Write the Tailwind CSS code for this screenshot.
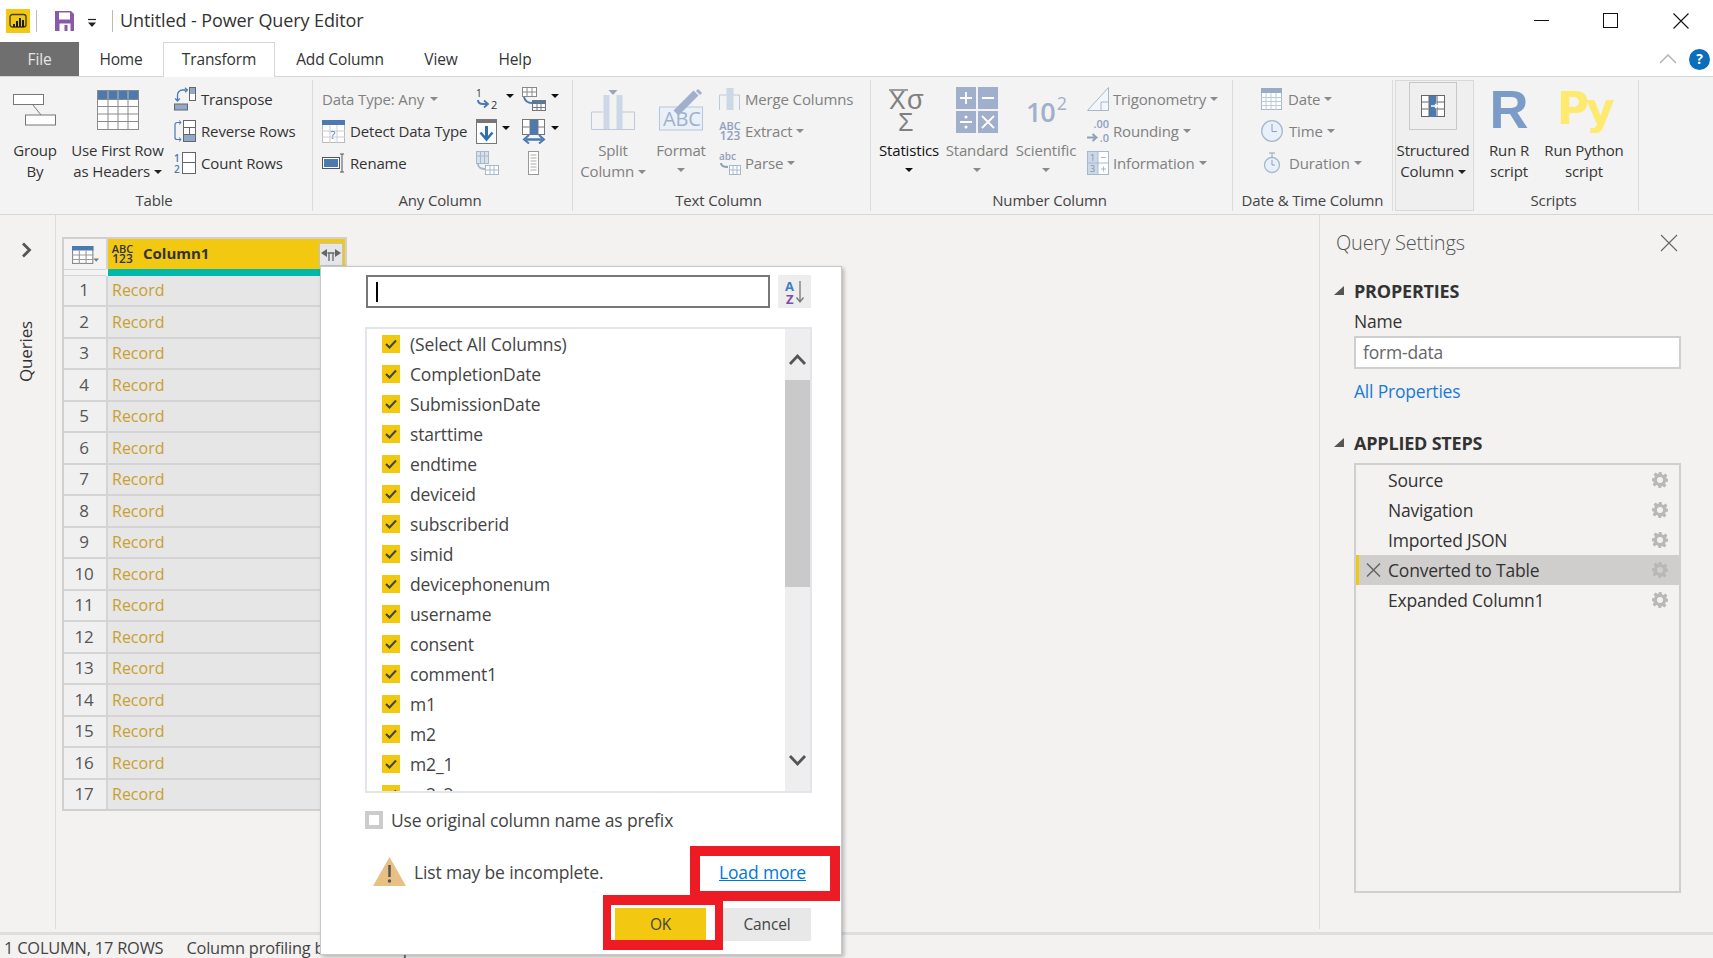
<!DOCTYPE html>
<html lang="en">
<head>
<meta charset="utf-8">
<title>Untitled - Power Query Editor</title>
<script src="https://cdn.jsdelivr.net/npm/@tailwindcss/browser@4"></script>
</head>
<body class="font-['Open_Sans',sans-serif] text-[#333] bg-white overflow-hidden tracking-[-0.15px]">
<svg class="absolute w-0 h-0">
  <symbol id="gear" viewBox="0 0 16 16"><path d="M6.500 0h3l.4 2.200 1.600.7L13.400 1.600l2 2-1.300 1.900.7 1.600L16 6.500v3l-2.200.4-.7 1.600 1.300 1.900-2 2-1.900-1.300-1.600.7L9.500 16h-3l-.4-2.200-1.600-.7-1.900 1.300-2-2 1.300-1.900-.7-1.600L0 9.500v-3l2.200-.4.7-1.600L1.600 2.600l2-2 1.900 1.300 1.600-.7z M8 5a3 3 0 100 6 3 3 0 000-6z" fill="#b8b8b8" fill-rule="evenodd"/></symbol>
  <symbol id="chk" viewBox="0 0 12 10"><path d="M1 5l3.500 3.500L11 1.500" stroke="#444" stroke-width="2" fill="none"/></symbol>
</svg>
<div class="relative w-[1713px] h-[958px] flex flex-col overflow-hidden text-[15px] leading-[20.5px]">

<!-- title bar -->
<div class="h-[42px] flex items-center shrink-0 pb-[1px]">
  <div class="ml-[6px] w-[24px] h-[24px] bg-[#f2c811] flex items-center justify-center">
    <svg class="w-[18px] h-[16px]" viewBox="0 0 18 16"><rect x="1" y="1.500" width="16" height="12.500" rx="2.500" fill="none" stroke="#4a4210" stroke-width="1.400"/><path d="M5 14v-3M8 14V8M11 14V5M14 14V7" stroke="#1c1c1c" stroke-width="2"/></svg>
  </div>
  <div class="ml-[6px] w-px h-[22px] bg-[#bbb]"></div>
  <svg class="ml-[18px] w-[19px] h-[20px]" viewBox="0 0 19 20"><path d="M0 0h16l3 3v17H0z" fill="#8a5aa8"/><rect x="4" y="1.500" width="11" height="7" fill="#fff"/><rect x="4.500" y="12.500" width="11" height="7.500" fill="#fff"/><rect x="9.500" y="14" width="3" height="6" fill="#8a5aa8"/></svg>
  <svg class="ml-[13px] w-[10px] h-[10px] mt-[4px]" viewBox="0 0 10 10"><path d="M1 1.500h8" stroke="#222" stroke-width="1.200"/><path d="M1 4.500h8L5 9z" fill="#222"/></svg>
  <div class="ml-[15px] w-px h-[22px] bg-[#bbb]"></div>
  <div class="ml-[7px] text-[18px] tracking-[-0.1px] text-[#333]">Untitled - Power Query Editor</div>
  <div class="ml-auto flex items-center mr-[24px]">
    <div class="w-[15px] h-px bg-[#111] mr-[54px]"></div>
    <div class="w-[15px] h-[15px] border border-[#111] mr-[55px]"></div>
    <svg class="w-[16px] h-[16px]" viewBox="0 0 16 16"><path d="M.5.5l15 15M15.500.5l-15 15" stroke="#111" stroke-width="1.100" fill="none"/></svg>
  </div>
</div>

<!-- tabs -->
<div class="relative h-[34px] flex shrink-0 text-[15.5px] items-stretch">
  <div class="w-[79px] bg-[#6f6f6f] text-[#e6e6e6] flex items-center justify-center">File</div>
  <div class="w-[84px] flex items-center justify-center">Home</div>
  <div class="w-[112px] h-[35px] pb-[1px] bg-white border border-b-0 border-[#d6d6d6] flex items-center justify-center z-10">Transform</div>
  <div class="w-[130px] flex items-center justify-center">Add Column</div>
  <div class="w-[72px] flex items-center justify-center">View</div>
  <div class="w-[76px] flex items-center justify-center">Help</div>
  <div class="ml-auto flex items-center pr-[3px]">
    <svg class="w-[18px] h-[10px] mr-[12px]" viewBox="0 0 18 10"><path d="M1 9l8-8 8 8" stroke="#b5b5b5" stroke-width="1.500" fill="none"/></svg>
    <div class="w-[21px] h-[21px] rounded-full bg-[#0a6ebd] text-white text-[14px] font-bold flex items-center justify-center">?</div>
  </div>
</div>

<!-- ribbon -->
<div class="relative h-[139px] shrink-0 bg-[#f3f3f3] border-y border-[#d6d6d6] flex py-[3px]">

  <!-- Table -->
  <div class="w-[313px] border-r border-[#dcdcdc] flex flex-col">
    <div class="flex-1 flex">
      <div class="w-[70px] flex flex-col items-center">
        <div class="h-[60px] flex items-center justify-center">
          <svg class="w-[44px] h-[32px]" viewBox="0 0 44 32"><rect x=".5" y=".5" width="30" height="10" fill="#fff" stroke="#777"/><rect x="12.500" y="21" width="30" height="10" fill="#fff" stroke="#777"/><path d="M20 11l8 10" stroke="#777"/></svg>
        </div>
        <div class="text-center">Group<br>By</div>
      </div>
      <div class="w-[95px] flex flex-col items-center">
        <div class="h-[60px] flex items-center justify-center">
          <svg class="w-[42px] h-[40px]" viewBox="0 0 42 40"><rect x=".5" y=".5" width="41" height="39" fill="#fff" stroke="#8a8a8a"/><rect x="1" y="1" width="40" height="8" fill="#4a7ab0"/><path d="M11 1v38M21 1v38M31 1v38M1 16.500h40M1 24h40M1 31.500h40M1 9.500h40" stroke="#8a8a8a" fill="none"/><path d="M11 1v8M21 1v8M31 1v8" stroke="#fff" opacity=".4"/></svg>
        </div>
        <div class="text-center whitespace-nowrap">Use First Row<br>as Headers <span class="inline-block w-0 h-0 border-x-[4px] border-t-[4px] border-x-transparent border-t-[#222] align-[3px]"></span></div>
      </div>
      <div class="ml-[9px] pt-[3px] flex flex-col">
        <div class="h-[32px] flex items-center gap-[5px]">
          <svg class="w-[22px] h-[24px]" viewBox="0 0 22 24"><rect x="15.500" y=".5" width="6" height="13" fill="#fff" stroke="#666"/><rect x="16" y="1" width="5" height="6" fill="#8ea9c9"/><rect x=".5" y="17" width="13" height="6" fill="#8ea9c9" stroke="#666"/><path d="M3.500 14V8a5 5 0 015-5h4" stroke="#4a7ab0" stroke-width="1.300" fill="none"/><path d="M11 .8L13.500 3 11 5.200M1.200 11.500L3.500 14l2.300-2.500" stroke="#4a7ab0" stroke-width="1.200" fill="none"/></svg>
          <span>Transpose</span>
        </div>
        <div class="h-[32px] flex items-center gap-[5px]">
          <svg class="w-[22px] h-[24px]" viewBox="0 0 22 24"><rect x="9.500" y="1.500" width="12" height="7" fill="#fff" stroke="#666"/><rect x="9.500" y="8.500" width="12" height="7" fill="#fff" stroke="#666"/><path d="M15.500 8.500v7" stroke="#666"/><rect x="9.500" y="15.500" width="12" height="7" fill="#8ea9c9" stroke="#666"/><path d="M7 3.500H3a2 2 0 00-2 2v13a2 2 0 002 2h4" stroke="#4a7ab0" stroke-width="1.200" fill="none"/><path d="M5 1.500l2.200 2-2.200 2M5 18.500l2.200 2-2.200 2" stroke="#4a7ab0" fill="none"/></svg>
          <span>Reverse Rows</span>
        </div>
        <div class="h-[32px] flex items-center gap-[5px]">
          <svg class="w-[22px] h-[24px]" viewBox="0 0 22 24"><text x="0" y="10.500" font-size="10" font-family="Open Sans" font-weight="600" fill="#4a7ab0">1</text><text x="0" y="22" font-size="10" font-family="Open Sans" font-weight="600" fill="#4a7ab0">2</text><rect x="8.500" y="1.500" width="13" height="10" fill="#fff" stroke="#666"/><rect x="8.500" y="11.500" width="13" height="11" fill="#fff" stroke="#666"/></svg>
          <span>Count Rows</span>
        </div>
      </div>
    </div>
    <div class="h-[22px] pt-[1px] pr-[4px] text-center text-[#444]">Table</div>
  </div>

  <!-- Any Column -->
  <div class="w-[260px] border-r border-[#dcdcdc] flex flex-col">
    <div class="flex-1 flex">
      <div class="ml-[9px] w-[154px] pt-[3px] flex flex-col">
        <div class="h-[32px] flex items-center text-[#808080]">Data Type: Any<span class="ml-[6px] w-0 h-0 border-x-[4px] border-t-[4px] border-x-transparent border-t-[#8a8a8a]"></span></div>
        <div class="h-[32px] flex items-center gap-[5px]">
          <svg class="w-[23px] h-[24px]" viewBox="0 0 23 24"><rect x=".5" y="1.500" width="22" height="22" fill="#fff" stroke="#bbb"/><rect x="0" y="1" width="23" height="5" fill="#4a7ab0"/><path d="M8 6v18M15 6v18M0 12h23M0 18h23" stroke="#cfcfcf"/><text x="8.500" y="20" font-size="11" font-family="Open Sans" fill="#4a7ab0">?</text></svg>
          <span class="whitespace-nowrap">Detect Data Type</span>
        </div>
        <div class="h-[32px] flex items-center gap-[5px]">
          <svg class="w-[23px] h-[24px]" viewBox="0 0 23 24"><rect x=".5" y="6.500" width="17" height="11" fill="#fff" stroke="#555"/><rect x="2" y="8" width="14" height="8" fill="#4a7ab0"/><path d="M18 3h4M18 21h4M20 3v18" stroke="#555" fill="none"/></svg>
          <span>Rename</span>
        </div>
      </div>
      <div class="w-[46px] pt-[3px] flex flex-col">
        <div class="h-[32px] flex items-center gap-[5px]">
          <svg class="w-[25px] h-[22px]" viewBox="0 0 25 22"><text x="0" y="9" font-size="10" font-family="Open Sans" fill="#333">1</text><path d="M2 12c0 3 2 4 5 4h4" stroke="#4a7ab0" stroke-width="2" fill="none"/><path d="M8 12.500l4 3.500-4 3.500" stroke="#4a7ab0" stroke-width="1.800" fill="none"/><text x="15" y="21" font-size="11" font-family="Open Sans" fill="#333">2</text></svg>
          <span class="w-0 h-0 border-x-[4px] border-t-[4px] border-x-transparent border-t-[#111] -mt-[6px]"></span>
        </div>
        <div class="h-[32px] flex items-center gap-[5px]">
          <svg class="w-[21px] h-[25px]" viewBox="0 0 21 25"><rect x=".5" y=".5" width="20" height="24" fill="#fff" stroke="#777"/><rect x="0" y="0" width="21" height="4" fill="#777"/><path d="M10.500 7v13" stroke="#2f6fae" stroke-width="3"/><path d="M4.500 13.500l6 7 6-7" stroke="#2f6fae" stroke-width="2.500" fill="none"/></svg>
          <span class="w-0 h-0 border-x-[4px] border-t-[4px] border-x-transparent border-t-[#111] -mt-[6px]"></span>
        </div>
        <div class="h-[32px] flex items-center">
          <svg class="w-[23px] h-[24px]" viewBox="0 0 23 24"><rect x=".5" y=".5" width="12" height="12" fill="#d8e0ea" stroke="#a7b8cc"/><path d="M.5 5h12M4.500.5v12M8.500.5v12" stroke="#a7b8cc"/><rect x="9.500" y="14.500" width="13" height="9" fill="#fff" stroke="#a7b8cc"/><path d="M9.500 19h13M14 14.500v9M18 14.500v9" stroke="#a7b8cc"/><path d="M2 13c0 3 3 5 7 5" stroke="#a7b8cc" stroke-width="2" fill="none"/></svg>
        </div>
      </div>
      <div class="pt-[3px] flex flex-col">
        <div class="h-[32px] flex items-center gap-[5px]">
          <svg class="w-[24px] h-[24px]" viewBox="0 0 24 24"><rect x=".5" y=".5" width="14" height="9" fill="#fff" stroke="#888"/><path d="M.5 5h14M5 .5v9M10 .5v9" stroke="#888"/><rect x="10.500" y="13.500" width="13" height="10" fill="#fff" stroke="#777"/><rect x="11" y="14" width="12" height="3" fill="#4a7ab0"/><path d="M10.500 20.500h13M15 14v10M19 14v10" stroke="#777"/><path d="M2 10c1 4 4 6 8 6" stroke="#4a7ab0" stroke-width="2" fill="none"/></svg>
          <span class="w-0 h-0 border-x-[4px] border-t-[4px] border-x-transparent border-t-[#111] -mt-[6px]"></span>
        </div>
        <div class="h-[32px] flex items-center gap-[5px]">
          <svg class="w-[24px] h-[25px]" viewBox="0 0 24 25"><rect x=".5" y=".5" width="22" height="15" fill="#fff" stroke="#777"/><rect x="8" y="1" width="8" height="15" fill="#4a7ab0"/><path d="M8 .5v15M16 .5v15M.5 8h7M16 8h6" stroke="#777"/><path d="M4 20.500h16" stroke="#4a7ab0" stroke-width="2.500"/><path d="M7 16l-5 4.500 5 4M17 16l5 4.500-5 4" stroke="#4a7ab0" stroke-width="2" fill="none"/></svg>
          <span class="w-0 h-0 border-x-[4px] border-t-[4px] border-x-transparent border-t-[#111] -mt-[6px]"></span>
        </div>
        <div class="h-[32px] flex items-center pl-[6px]">
          <svg class="w-[11px] h-[24px]" viewBox="0 0 11 24"><rect x=".5" y=".5" width="10" height="23" fill="#fff" stroke="#999"/><path d="M2.500 4h6M2.500 7h6M2.500 10h6M2.500 13h6M2.500 16h6M2.500 19h6" stroke="#aaa"/></svg>
        </div>
      </div>
    </div>
    <div class="h-[22px] pt-[1px] pr-[5px] text-center text-[#444]">Any Column</div>
  </div>

  <!-- Text Column -->
  <div class="w-[298px] border-r border-[#dcdcdc] flex flex-col">
    <div class="flex-1 flex">
      <div class="w-[80px] flex flex-col items-center text-[#808080]">
        <div class="h-[60px] flex items-center justify-center">
          <svg class="w-[44px] h-[40px]" viewBox="0 0 44 40"><path d="M.5 39.500V22h12M43.500 39.500V22h-12" fill="none" stroke="#bcc9dc"/><rect x="12.500" y="5" width="6" height="34.500" fill="#ccd8e8"/><rect x="25.500" y="5" width="6" height="34.500" fill="#ccd8e8"/><path d="M.5 39.500h43" stroke="#bcc9dc"/><path d="M17.500 0h9l-4.500 5z" fill="#9aa6b8"/></svg>
        </div>
        <div class="text-center">Split<br>Column <span class="inline-block w-0 h-0 border-x-[4px] border-t-[4px] border-x-transparent border-t-[#8a8a8a] align-[3px]"></span></div>
      </div>
      <div class="w-[56px] flex flex-col items-center text-[#808080]">
        <div class="h-[60px] flex items-center justify-center">
          <svg class="w-[46px] h-[42px]" viewBox="0 0 46 42"><rect x="1.500" y="18" width="43" height="23" fill="#eaf0f8" stroke="#b8c6dc"/><text x="5" y="37" font-size="20" font-family="Open Sans" fill="#9fb0cc">ABC</text><path d="M18 24L38 4" stroke="#a0b0cc" stroke-width="7"/><path d="M39 1l4 4" stroke="#a0b0cc" stroke-width="3"/></svg>
        </div>
        <div class="text-center">Format</div>
        <span class="mt-[7px] w-0 h-0 border-x-[4px] border-t-[4px] border-x-transparent border-t-[#8a8a8a]"></span>
      </div>
      <div class="ml-[10px] pt-[3px] flex flex-col text-[#808080]">
        <div class="h-[32px] flex items-center gap-[4px]">
          <svg class="w-[22px] h-[24px]" viewBox="0 0 22 24"><path d="M.5 23V8h20v15" fill="none" stroke="#bcc9dc"/><rect x="7.500" y="1" width="7" height="22" fill="#ccd8e8"/></svg>
          <span>Merge Columns</span>
        </div>
        <div class="h-[32px] flex items-center gap-[4px]">
          <div class="w-[22px] text-[11px] leading-[10px] font-semibold text-[#8fa0bd] text-center tracking-[0px]">ABC<br><span class="text-[12px]">123</span></div>
          <span>Extract</span><span class="w-0 h-0 border-x-[4px] border-t-[4px] border-x-transparent border-t-[#8a8a8a]"></span>
        </div>
        <div class="h-[32px] flex items-center gap-[4px]">
          <div class="relative w-[22px] h-[24px]"><span class="absolute left-0 -top-[1px] text-[10px] font-semibold text-[#8fa0bd] leading-[12px] tracking-[0px]">abc</span><svg class="absolute left-0 bottom-0 w-[22px] h-[14px]" viewBox="0 0 22 14"><rect x="10.500" y="4.500" width="11" height="9" fill="#fff" stroke="#a7b8cc"/><path d="M10.500 9h11M14 4.500v9M18 4.500v9" stroke="#a7b8cc"/><path d="M2 2c0 3 2 4 7 4" stroke="#8fa0bd" stroke-width="2" fill="none"/></svg></div>
          <span>Parse</span><span class="w-0 h-0 border-x-[4px] border-t-[4px] border-x-transparent border-t-[#8a8a8a]"></span>
        </div>
      </div>
    </div>
    <div class="h-[22px] pt-[1px] pr-[6px] text-center text-[#444]">Text Column</div>
  </div>

  <!-- Number Column -->
  <div class="w-[362px] border-r border-[#dcdcdc] flex flex-col">
    <div class="flex-1 flex">
      <div class="w-[76px] flex flex-col items-center text-[#111]">
        <div class="h-[60px] flex items-center justify-center">
          <svg class="w-[40px] h-[44px] mt-[2px]" viewBox="0 0 40 44"><path d="M0 1h19" stroke="#808080" stroke-width="1.500"/><text x="0" y="20" font-size="25" font-family="Liberation Sans" fill="#808080">X</text><text x="18" y="20" font-size="27" font-family="Liberation Sans" fill="#808080">σ</text><text x="9" y="42" font-size="25" font-family="Liberation Sans" fill="#808080">Σ</text></svg>
        </div>
        <div class="text-center">Statistics</div>
        <span class="mt-[7px] w-0 h-0 border-x-[4px] border-t-[4px] border-x-transparent border-t-[#111]"></span>
      </div>
      <div class="w-[60px] flex flex-col items-center text-[#808080]">
        <div class="h-[60px] flex items-center justify-center">
          <svg class="w-[42px] h-[46px]" viewBox="0 0 42 46"><rect width="20" height="22" fill="#a0b0cc"/><rect x="22" width="20" height="22" fill="#a0b0cc"/><rect y="24" width="20" height="22" fill="#a0b0cc"/><rect x="22" y="24" width="20" height="22" fill="#a0b0cc"/><path d="M4 11h12M10 5v12M26 11h12M4 35h12M26 29l12 12M38 29L26 41" stroke="#fff" stroke-width="1.800"/><circle cx="10" cy="30" r="1.500" fill="#fff"/><circle cx="10" cy="40" r="1.500" fill="#fff"/></svg>
        </div>
        <div class="text-center">Standard</div>
        <span class="mt-[7px] w-0 h-0 border-x-[4px] border-t-[4px] border-x-transparent border-t-[#8a8a8a]"></span>
      </div>
      <div class="w-[78px] flex flex-col items-center text-[#808080]">
        <div class="h-[60px] flex items-center justify-center">
          <div class="mt-[3px] text-[27px] leading-[44px] font-semibold text-[#a0b0cc] tracking-[-1px]">10<sup class="ml-[2px] text-[18px] font-normal leading-none -top-[12px]">2</sup></div>
        </div>
        <div class="text-center">Scientific</div>
        <span class="mt-[7px] w-0 h-0 border-x-[4px] border-t-[4px] border-x-transparent border-t-[#8a8a8a]"></span>
      </div>
      <div class="ml-[2px] pt-[3px] flex flex-col text-[#808080]">
        <div class="h-[32px] flex items-center gap-[4px]">
          <svg class="w-[22px] h-[24px]" viewBox="0 0 22 24"><path d="M.5 23.500L21.500.5v23z" fill="#f3f6fb" stroke="#a7b8cc"/><path d="M14 23.500V15h7.500" stroke="#a7b8cc" fill="none"/></svg>
          <span>Trigonometry</span><span class="w-0 h-0 border-x-[4px] border-t-[4px] border-x-transparent border-t-[#8a8a8a]"></span>
        </div>
        <div class="h-[32px] flex items-center gap-[4px]">
          <div class="relative w-[22px] h-[24px]"><span class="absolute right-0 -top-[2px] text-[11px] leading-[14px] font-semibold text-[#8fa0bd] tracking-[0px]">.00</span><span class="absolute right-0 bottom-[-2px] text-[11px] leading-[14px] font-semibold text-[#8fa0bd] tracking-[0px]">.0</span><svg class="absolute left-0 bottom-[1px] w-[11px] h-[9px]" viewBox="0 0 11 9"><path d="M0 4.500h9M5.500 1l4 3.500-4 3.500" stroke="#8fa0bd" stroke-width="2" fill="none"/></svg></div>
          <span>Rounding</span><span class="w-0 h-0 border-x-[4px] border-t-[4px] border-x-transparent border-t-[#8a8a8a]"></span>
        </div>
        <div class="h-[32px] flex items-center gap-[4px]">
          <svg class="w-[22px] h-[24px]" viewBox="0 0 22 24"><rect x=".5" y=".5" width="21" height="23" fill="#fff" stroke="#a7b8cc"/><rect x="1" y="1" width="10" height="22" fill="#ccd8e8"/><path d="M11 .5v23M.5 12h21M14 6.500h5M14 18h5M16.500 15.500v5" stroke="#a7b8cc"/><text x="3" y="9.500" font-size="9" font-family="Open Sans" fill="#7d90ad">1</text><text x="3" y="21" font-size="9" font-family="Open Sans" fill="#7d90ad">3</text></svg>
          <span>Information</span><span class="w-0 h-0 border-x-[4px] border-t-[4px] border-x-transparent border-t-[#8a8a8a]"></span>
        </div>
      </div>
    </div>
    <div class="h-[22px] pt-[1px] pr-[4px] text-center text-[#444]">Number Column</div>
  </div>

  <!-- Date & Time -->
  <div class="w-[160px] border-r border-[#dcdcdc] flex flex-col">
    <div class="flex-1 pl-[28px] pt-[3px] flex flex-col text-[#808080]">
      <div class="h-[32px] flex items-center gap-[6px]">
        <svg class="w-[21px] h-[22px]" viewBox="0 0 21 22"><rect x=".5" y=".5" width="20" height="21" fill="#fff" stroke="#a7b8cc"/><rect width="21" height="5" fill="#9aabc4"/><path d="M5 5v17M10 5v17M15 5v17M0 9.500h21M0 13.500h21M0 17.500h21" stroke="#bccadd"/></svg>
        <span>Date</span><span class="-ml-[2px] w-0 h-0 border-x-[4px] border-t-[4px] border-x-transparent border-t-[#8a8a8a]"></span>
      </div>
      <div class="h-[32px] flex items-center gap-[6px]">
        <svg class="w-[22px] h-[24px]" viewBox="0 0 22 24"><circle cx="11" cy="12" r="10.300" fill="#e8f0fa" stroke="#a7b8cc" stroke-width="1.300"/><path d="M11 5v7.500h5" stroke="#8fa0bd" fill="none"/></svg>
        <span>Time</span><span class="-ml-[2px] w-0 h-0 border-x-[4px] border-t-[4px] border-x-transparent border-t-[#8a8a8a]"></span>
      </div>
      <div class="h-[32px] flex items-center gap-[6px]">
        <svg class="w-[22px] h-[24px]" viewBox="0 0 22 24"><circle cx="11" cy="14" r="7.500" fill="#e8f0fa" stroke="#a7b8cc" stroke-width="1.300"/><path d="M8 2h6M11 2v4M11 9v5h3" stroke="#8fa0bd" fill="none"/></svg>
        <span>Duration</span><span class="-ml-[2px] w-0 h-0 border-x-[4px] border-t-[4px] border-x-transparent border-t-[#8a8a8a]"></span>
      </div>
    </div>
    <div class="h-[22px] pt-[1px] text-center text-[#444] whitespace-nowrap">Date &amp; Time Column</div>
  </div>

  <!-- Scripts -->
  <div class="relative w-[246px] border-r border-[#dcdcdc] flex flex-col">
    <div class="absolute left-[2px] top-0 w-[79px] h-[131px] bg-[#efefef] border border-[#d9d9d9]"></div>
    <div class="relative flex-1 flex">
      <div class="w-[80px] flex flex-col items-center">
        <div class="h-[60px] flex items-center justify-center">
          <div class="w-[48px] h-[48px] border border-[#c8c8c8] flex items-center justify-center -mt-[9px]">
            <svg class="w-[24px] h-[22px]" viewBox="0 0 24 22"><rect x=".5" y=".5" width="23" height="21" fill="#fff" stroke="#666"/><rect x="8" y="1" width="7" height="21" fill="#4a7ab0"/><path d="M8 .5v21M16 .5v21M.5 7h7M.5 14h7M16 7h7.500M16 14h7.500" stroke="#666"/><path d="M10 11h6M14 9l2.500 2-2.500 2" stroke="#fff" stroke-width="1.300" fill="none"/></svg>
          </div>
        </div>
        <div class="text-center">Structured<br>Column <span class="inline-block w-0 h-0 border-x-[4px] border-t-[4px] border-x-transparent border-t-[#222] align-[3px]"></span></div>
      </div>
      <div class="w-[72px] flex flex-col items-center">
        <div class="h-[60px] flex items-center justify-center">
          <div class="text-[54px] leading-[50px] font-bold text-[#7b9cc8] font-['Liberation_Sans',sans-serif] tracking-[0px] -mt-[3px]">R</div>
        </div>
        <div class="text-center">Run R<br>script</div>
      </div>
      <div class="w-[78px] flex flex-col items-center">
        <div class="h-[60px] flex items-center justify-center">
          <div class="text-[44px] leading-[50px] font-bold text-[#fdea6e] font-['DejaVu_Sans',sans-serif] tracking-[-4px] -mt-[2px]">Py</div>
        </div>
        <div class="text-center whitespace-nowrap">Run Python<br>script</div>
      </div>
    </div>
    <div class="relative h-[22px] pt-[1px] pl-[76px] text-center text-[#444]">Scripts</div>
  </div>
</div>

<!-- main -->
<div class="flex-1 flex bg-[#f3f2f1] min-h-0">
  <div class="w-[56px] shrink-0 border-r border-[#dcdcdc] mb-[3px] flex flex-col items-center pr-[2px]">
    <svg class="mt-[27px] w-[11px] h-[16px]" viewBox="0 0 11 16"><path d="M2 1.500l6.500 6.500L2 14.500" stroke="#555" stroke-width="2.800" fill="none"/></svg>
    <div class="mt-[63px] [writing-mode:vertical-rl] rotate-180 text-[17px]">Queries</div>
  </div>

  <div class="w-[1263px] shrink-0 pl-[6px] pt-[22px]">
    <div class="w-[285px] border-2 border-[#d0d0d0] bg-[#d4d4d4]">
      <div class="flex h-[30px] bg-[#d4d4d4]">
        <div class="w-[42px] bg-[#f3f3f3] flex items-center justify-center">
          <svg class="w-[27px] h-[18px] mt-[1px]" viewBox="0 0 24 16"><rect x=".5" y=".5" width="18" height="15" fill="#fff" stroke="#8a8a8a"/><rect width="19" height="4" fill="#4a7ab0"/><path d="M6.500 4v12M12.500 4v12M0 8h19M0 12h19" stroke="#999"/><path d="M19 11h5l-2.500 3z" fill="#777"/></svg>
        </div>
        <div class="ml-[2px] flex-1 bg-[#f2c811] flex items-center relative">
          <div class="ml-[3px] w-[23px] text-[11px] leading-[10px] font-semibold text-[#333] tracking-[0px] text-center">ABC<br><span class="text-[12px]">123</span></div>
          <div class="ml-[9px] text-[15px] font-bold tracking-[0px] text-[#333] -mt-[1px]">Column1</div>
          <div class="absolute right-[2px] top-[4px] w-[24px] h-[23px] bg-[#e4e6ea] border border-[#c0c4c8] flex items-center justify-center">
            <svg class="w-[20px] h-[12px]" viewBox="0 0 20 12"><path d="M0 4l6-4v8zM20 4l-6-4v8z" fill="#666"/><path d="M6.500 4H10m0 0h3.500M8 4v8M12 4v8" stroke="#666" stroke-width="1.300" fill="none"/></svg>
          </div>
        </div>
      </div>
      <div class="flex h-[7px] bg-[#f3f3f3]">
        <div class="w-[42px] border-y border-[#d4d4d4]"></div>
        <div class="ml-[2px] flex-1 bg-[#01b8aa]"></div>
      </div>
      <div class="flex flex-col gap-[2px]">
        <div class="flex h-[29.47px]"><div class="w-[42px] pr-[2px] bg-[#f0f0f0] text-[17px] text-[#555] flex items-center justify-center">1</div><div class="ml-[2px] flex-1 bg-[#e6e6e6] text-[#c8a030] text-[16px] tracking-[0px] pl-[4px] flex items-center">Record</div></div>
        <div class="flex h-[29.47px]"><div class="w-[42px] pr-[2px] bg-[#f0f0f0] text-[17px] text-[#555] flex items-center justify-center">2</div><div class="ml-[2px] flex-1 bg-[#e6e6e6] text-[#c8a030] text-[16px] tracking-[0px] pl-[4px] flex items-center">Record</div></div>
        <div class="flex h-[29.47px]"><div class="w-[42px] pr-[2px] bg-[#f0f0f0] text-[17px] text-[#555] flex items-center justify-center">3</div><div class="ml-[2px] flex-1 bg-[#e6e6e6] text-[#c8a030] text-[16px] tracking-[0px] pl-[4px] flex items-center">Record</div></div>
        <div class="flex h-[29.47px]"><div class="w-[42px] pr-[2px] bg-[#f0f0f0] text-[17px] text-[#555] flex items-center justify-center">4</div><div class="ml-[2px] flex-1 bg-[#e6e6e6] text-[#c8a030] text-[16px] tracking-[0px] pl-[4px] flex items-center">Record</div></div>
        <div class="flex h-[29.47px]"><div class="w-[42px] pr-[2px] bg-[#f0f0f0] text-[17px] text-[#555] flex items-center justify-center">5</div><div class="ml-[2px] flex-1 bg-[#e6e6e6] text-[#c8a030] text-[16px] tracking-[0px] pl-[4px] flex items-center">Record</div></div>
        <div class="flex h-[29.47px]"><div class="w-[42px] pr-[2px] bg-[#f0f0f0] text-[17px] text-[#555] flex items-center justify-center">6</div><div class="ml-[2px] flex-1 bg-[#e6e6e6] text-[#c8a030] text-[16px] tracking-[0px] pl-[4px] flex items-center">Record</div></div>
        <div class="flex h-[29.47px]"><div class="w-[42px] pr-[2px] bg-[#f0f0f0] text-[17px] text-[#555] flex items-center justify-center">7</div><div class="ml-[2px] flex-1 bg-[#e6e6e6] text-[#c8a030] text-[16px] tracking-[0px] pl-[4px] flex items-center">Record</div></div>
        <div class="flex h-[29.47px]"><div class="w-[42px] pr-[2px] bg-[#f0f0f0] text-[17px] text-[#555] flex items-center justify-center">8</div><div class="ml-[2px] flex-1 bg-[#e6e6e6] text-[#c8a030] text-[16px] tracking-[0px] pl-[4px] flex items-center">Record</div></div>
        <div class="flex h-[29.47px]"><div class="w-[42px] pr-[2px] bg-[#f0f0f0] text-[17px] text-[#555] flex items-center justify-center">9</div><div class="ml-[2px] flex-1 bg-[#e6e6e6] text-[#c8a030] text-[16px] tracking-[0px] pl-[4px] flex items-center">Record</div></div>
        <div class="flex h-[29.47px]"><div class="w-[42px] pr-[2px] bg-[#f0f0f0] text-[17px] text-[#555] flex items-center justify-center">10</div><div class="ml-[2px] flex-1 bg-[#e6e6e6] text-[#c8a030] text-[16px] tracking-[0px] pl-[4px] flex items-center">Record</div></div>
        <div class="flex h-[29.47px]"><div class="w-[42px] pr-[2px] bg-[#f0f0f0] text-[17px] text-[#555] flex items-center justify-center">11</div><div class="ml-[2px] flex-1 bg-[#e6e6e6] text-[#c8a030] text-[16px] tracking-[0px] pl-[4px] flex items-center">Record</div></div>
        <div class="flex h-[29.47px]"><div class="w-[42px] pr-[2px] bg-[#f0f0f0] text-[17px] text-[#555] flex items-center justify-center">12</div><div class="ml-[2px] flex-1 bg-[#e6e6e6] text-[#c8a030] text-[16px] tracking-[0px] pl-[4px] flex items-center">Record</div></div>
        <div class="flex h-[29.47px]"><div class="w-[42px] pr-[2px] bg-[#f0f0f0] text-[17px] text-[#555] flex items-center justify-center">13</div><div class="ml-[2px] flex-1 bg-[#e6e6e6] text-[#c8a030] text-[16px] tracking-[0px] pl-[4px] flex items-center">Record</div></div>
        <div class="flex h-[29.47px]"><div class="w-[42px] pr-[2px] bg-[#f0f0f0] text-[17px] text-[#555] flex items-center justify-center">14</div><div class="ml-[2px] flex-1 bg-[#e6e6e6] text-[#c8a030] text-[16px] tracking-[0px] pl-[4px] flex items-center">Record</div></div>
        <div class="flex h-[29.47px]"><div class="w-[42px] pr-[2px] bg-[#f0f0f0] text-[17px] text-[#555] flex items-center justify-center">15</div><div class="ml-[2px] flex-1 bg-[#e6e6e6] text-[#c8a030] text-[16px] tracking-[0px] pl-[4px] flex items-center">Record</div></div>
        <div class="flex h-[29.47px]"><div class="w-[42px] pr-[2px] bg-[#f0f0f0] text-[17px] text-[#555] flex items-center justify-center">16</div><div class="ml-[2px] flex-1 bg-[#e6e6e6] text-[#c8a030] text-[16px] tracking-[0px] pl-[4px] flex items-center">Record</div></div>
        <div class="flex h-[29.47px]"><div class="w-[42px] pr-[2px] bg-[#f0f0f0] text-[17px] text-[#555] flex items-center justify-center">17</div><div class="ml-[2px] flex-1 bg-[#e6e6e6] text-[#c8a030] text-[16px] tracking-[0px] pl-[4px] flex items-center">Record</div></div>
      </div>
    </div>
  </div>

  <!-- query settings -->
  <div class="flex-1 border-l border-[#dcdcdc] mb-[3px] pl-[16px] pr-[32px] text-[17.5px] tracking-[-0.2px]">
    <div class="flex items-center justify-between h-[28px] mt-[14px] pr-[1px]">
      <div class="text-[20px] font-light text-[#555]">Query Settings</div>
      <svg class="w-[18px] h-[18px] mr-[2px]" viewBox="0 0 18 18"><path d="M1 1l16 16M17 1L1 17" stroke="#666" stroke-width="1.100" fill="none"/></svg>
    </div>
    <div class="mt-[22px] -ml-[2px] flex items-center gap-[9px] h-[24px] text-[18px] font-bold text-[#333]"><span class="w-0 h-0 relative"><span class="absolute left-0 -top-[5px] w-0 h-0 border-l-[10px] border-b-[9px] border-l-transparent border-b-[#555]"></span></span><span class="ml-[11px]">PROPERTIES</span></div>
    <div class="ml-[18px] mt-[8px]">Name</div>
    <div class="ml-[18px] mt-[4px] h-[33px] w-[327px] bg-white border-2 border-[#cfcfcf] pl-[7px] flex items-center text-[#666]">form-data</div>
    <div class="ml-[18px] mt-[12px] text-[#1a7bd4]">All Properties</div>
    <div class="mt-[30px] -ml-[2px] flex items-center gap-[9px] h-[24px] text-[18px] font-bold text-[#333]"><span class="w-0 h-0 relative"><span class="absolute left-0 -top-[5px] w-0 h-0 border-l-[10px] border-b-[9px] border-l-transparent border-b-[#555]"></span></span><span class="ml-[11px]">APPLIED STEPS</span></div>
    <div class="ml-[18px] mt-[8px] h-[430px] w-[327px] border-2 border-[#cfcfcf] flex flex-col">
      <div class="h-[30px] flex items-center pl-[32px] relative">Source<svg class="absolute right-[11px] w-[16px] h-[16px]"><use href="#gear"/></svg></div>
      <div class="h-[30px] flex items-center pl-[32px] relative">Navigation<svg class="absolute right-[11px] w-[16px] h-[16px]"><use href="#gear"/></svg></div>
      <div class="h-[30px] flex items-center pl-[32px] relative">Imported JSON<svg class="absolute right-[11px] w-[16px] h-[16px]"><use href="#gear"/></svg></div>
      <div class="h-[30px] flex items-center pl-[32px] relative bg-[#cfcecd]">
        <span class="absolute left-0 top-0 w-[3px] h-full bg-[#f2c811]"></span>
        <svg class="absolute left-[10px] w-[15px] h-[14px]" viewBox="0 0 15 14"><path d="M1 .5l13 13M14 .5l-13 13" stroke="#666" stroke-width="1.500" fill="none"/></svg>
        Converted to Table<svg class="absolute right-[11px] w-[16px] h-[16px]"><use href="#gear"/></svg></div>
      <div class="h-[30px] flex items-center pl-[32px] relative">Expanded Column1<svg class="absolute right-[11px] w-[16px] h-[16px]"><use href="#gear"/></svg></div>
    </div>
  </div>
</div>

<!-- status bar -->
<div class="h-[26px] shrink-0 bg-[#f3f2f1] border-t-[3px] border-[#dedede] flex items-center pl-[4px] pt-[3px] text-[16.4px] tracking-[-0.2px] text-[#444] whitespace-nowrap">
  <span>1 COLUMN, 17 ROWS</span><span class="ml-[23px]">Column profiling based on top 1000 rows</span>
</div>

<!-- expand-column popup -->
<div class="absolute left-[320px] top-[266px] w-[522px] h-[689px] bg-white border border-[#c8c8c8] shadow-[2px_2px_4px_rgba(0,0,0,0.25)] pl-[44px] pr-[30px] pt-[8px] text-[17.5px] tracking-[-0.15px] text-[#444]">
  <div class="flex items-stretch h-[33px] gap-[8px]">
    <div class="w-[405px] ml-[1px] border-2 border-[#777] flex items-center pl-[8px]"><span class="w-[2px] h-[20px] bg-black"></span></div>
    <div class="w-[33px] bg-[#ededed] flex items-center justify-center">
      <svg class="w-[20px] h-[26px]" viewBox="0 0 20 26"><text x="0" y="12" font-size="13" font-weight="700" font-family="Open Sans" fill="#3f7fc0">A</text><text x="1" y="25" font-size="13" font-weight="700" font-family="Open Sans" fill="#7b4fa8">Z</text><path d="M15 2v21M11.500 18.500L15 23l3.500-4.500" stroke="#777" stroke-width="1.300" fill="none"/></svg>
    </div>
  </div>
  <div class="relative mt-[19px] w-[447px] h-[466px] border-2 border-[#e2e6ea] overflow-hidden flex flex-col">
    <div class="absolute right-0 top-0 bottom-0 w-[25px] bg-[#eeeeee]">
      <div class="absolute left-0 right-0 top-[51px] h-[207px] bg-[#c9c9c9]"></div>
      <svg class="absolute left-[3px] top-[24px] w-[19px] h-[13px]" viewBox="0 0 19 13"><path d="M2 11l7.500-8 7.500 8" stroke="#555" stroke-width="2.800" fill="none"/></svg>
      <svg class="absolute left-[3px] top-[425px] w-[19px] h-[13px]" viewBox="0 0 19 13"><path d="M2 2l7.500 8 7.500-8" stroke="#555" stroke-width="2.800" fill="none"/></svg>
    </div>
    <div class="h-[30px] shrink-0 flex items-center pl-[15px]"><span class="w-[18px] h-[18px] bg-[#f2c811] flex items-center justify-center mr-[10px]"><svg class="w-[12px] h-[10px]"><use href="#chk"/></svg></span>(Select All Columns)</div>
    <div class="h-[30px] shrink-0 flex items-center pl-[15px]"><span class="w-[18px] h-[18px] bg-[#f2c811] flex items-center justify-center mr-[10px]"><svg class="w-[12px] h-[10px]"><use href="#chk"/></svg></span>CompletionDate</div>
    <div class="h-[30px] shrink-0 flex items-center pl-[15px]"><span class="w-[18px] h-[18px] bg-[#f2c811] flex items-center justify-center mr-[10px]"><svg class="w-[12px] h-[10px]"><use href="#chk"/></svg></span>SubmissionDate</div>
    <div class="h-[30px] shrink-0 flex items-center pl-[15px]"><span class="w-[18px] h-[18px] bg-[#f2c811] flex items-center justify-center mr-[10px]"><svg class="w-[12px] h-[10px]"><use href="#chk"/></svg></span>starttime</div>
    <div class="h-[30px] shrink-0 flex items-center pl-[15px]"><span class="w-[18px] h-[18px] bg-[#f2c811] flex items-center justify-center mr-[10px]"><svg class="w-[12px] h-[10px]"><use href="#chk"/></svg></span>endtime</div>
    <div class="h-[30px] shrink-0 flex items-center pl-[15px]"><span class="w-[18px] h-[18px] bg-[#f2c811] flex items-center justify-center mr-[10px]"><svg class="w-[12px] h-[10px]"><use href="#chk"/></svg></span>deviceid</div>
    <div class="h-[30px] shrink-0 flex items-center pl-[15px]"><span class="w-[18px] h-[18px] bg-[#f2c811] flex items-center justify-center mr-[10px]"><svg class="w-[12px] h-[10px]"><use href="#chk"/></svg></span>subscriberid</div>
    <div class="h-[30px] shrink-0 flex items-center pl-[15px]"><span class="w-[18px] h-[18px] bg-[#f2c811] flex items-center justify-center mr-[10px]"><svg class="w-[12px] h-[10px]"><use href="#chk"/></svg></span>simid</div>
    <div class="h-[30px] shrink-0 flex items-center pl-[15px]"><span class="w-[18px] h-[18px] bg-[#f2c811] flex items-center justify-center mr-[10px]"><svg class="w-[12px] h-[10px]"><use href="#chk"/></svg></span>devicephonenum</div>
    <div class="h-[30px] shrink-0 flex items-center pl-[15px]"><span class="w-[18px] h-[18px] bg-[#f2c811] flex items-center justify-center mr-[10px]"><svg class="w-[12px] h-[10px]"><use href="#chk"/></svg></span>username</div>
    <div class="h-[30px] shrink-0 flex items-center pl-[15px]"><span class="w-[18px] h-[18px] bg-[#f2c811] flex items-center justify-center mr-[10px]"><svg class="w-[12px] h-[10px]"><use href="#chk"/></svg></span>consent</div>
    <div class="h-[30px] shrink-0 flex items-center pl-[15px]"><span class="w-[18px] h-[18px] bg-[#f2c811] flex items-center justify-center mr-[10px]"><svg class="w-[12px] h-[10px]"><use href="#chk"/></svg></span>comment1</div>
    <div class="h-[30px] shrink-0 flex items-center pl-[15px]"><span class="w-[18px] h-[18px] bg-[#f2c811] flex items-center justify-center mr-[10px]"><svg class="w-[12px] h-[10px]"><use href="#chk"/></svg></span>m1</div>
    <div class="h-[30px] shrink-0 flex items-center pl-[15px]"><span class="w-[18px] h-[18px] bg-[#f2c811] flex items-center justify-center mr-[10px]"><svg class="w-[12px] h-[10px]"><use href="#chk"/></svg></span>m2</div>
    <div class="h-[30px] shrink-0 flex items-center pl-[15px]"><span class="w-[18px] h-[18px] bg-[#f2c811] flex items-center justify-center mr-[10px]"><svg class="w-[12px] h-[10px]"><use href="#chk"/></svg></span>m2_1</div>
    <div class="h-[30px] shrink-0 flex items-center pl-[15px]"><span class="w-[18px] h-[18px] bg-[#f2c811] flex items-center justify-center mr-[10px]"><svg class="w-[12px] h-[10px]"><use href="#chk"/></svg></span>m2_2</div>
  </div>
  <div class="mt-[17px] flex items-center h-[20px]"><span class="w-[18px] h-[18px] border-[4px] border-[#ccc] mr-[8px]"></span>Use original column name as prefix</div>
  <div class="mt-[27px] flex items-center h-[30px] pl-[8px]">
    <svg class="w-[33px] h-[29px] mr-[8px] -mt-[2px]" viewBox="0 0 33 29"><path d="M16.500 0L33 29H0z" fill="#e9c084"/><path d="M16.500 8v12" stroke="#555" stroke-width="2.500"/><circle cx="16.500" cy="24" r="1.700" fill="#555"/></svg>
    <span>List may be incomplete.</span>
    <span class="ml-auto mr-[6px] w-[86px] text-[#0078d7] underline whitespace-nowrap">Load more</span>
  </div>
  <div class="mt-[21px] flex items-center justify-end text-[15.5px]">
    <div class="w-[91px] h-[33px] bg-[#f2c811] flex items-center justify-center mr-[17px]">OK</div>
    <div class="w-[88px] h-[33px] bg-[#e8e8e8] flex items-center justify-center">Cancel</div>
  </div>
</div>

<!-- red annotation boxes -->
<div class="absolute left-[690px] top-[846px] w-[150px] h-[55px] border-[10px] border-[#ed1c24]"></div>
<div class="absolute left-[603px] top-[895px] w-[120px] h-[55px] border-[10px] border-x-[8px] border-[#ed1c24]"></div>

</div>
</body>
</html>
